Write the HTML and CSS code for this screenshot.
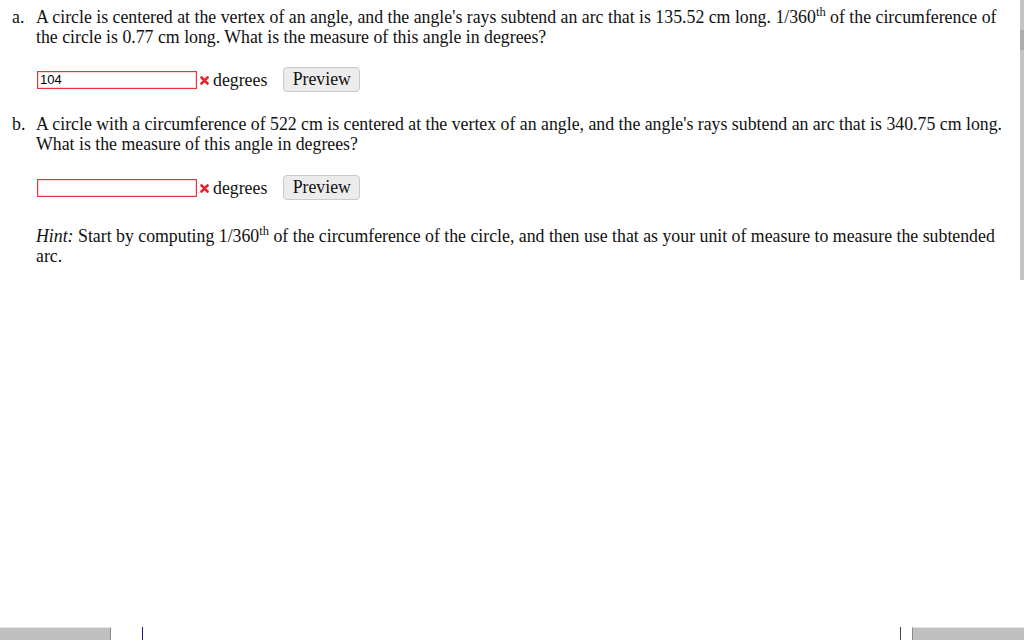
FILE: index.html
```html
<!DOCTYPE html>
<html>
<head>
<meta charset="utf-8">
<link rel="stylesheet" href="styles.css">
</head>
<body>
<div class="page">
  <main class="content">
    <div class="question">
      <span class="qlabel">a.</span>
      <div class="qtext">A circle is centered at the vertex of an angle, and the angle's rays subtend an arc that is 135.52 cm long. 1/360<sup>th</sup> of the circumference of the circle is 0.77 cm long. What is the measure of this angle in degrees?</div>
    </div>
    <div class="answer">
      <input class="field" type="text" value="104">
      <svg class="xmark" width="9" height="9" viewBox="0 0 9 9"><path d="M1.5 1.5 L7.5 7.5 M7.5 1.5 L1.5 7.5" stroke="#e0262e" stroke-width="2.6" stroke-linecap="round"/></svg>
      <span class="unit">degrees</span>
      <button class="preview">Preview</button>
    </div>
    <div class="question qb">
      <span class="qlabel">b.</span>
      <div class="qtext">A circle with a circumference of 522 cm is centered at the vertex of an angle, and the angle's rays subtend an arc that is 340.75 cm long. What is the measure of this angle in degrees?</div>
    </div>
    <div class="answer a2">
      <input class="field" type="text" value="">
      <svg class="xmark" width="9" height="9" viewBox="0 0 9 9"><path d="M1.5 1.5 L7.5 7.5 M7.5 1.5 L1.5 7.5" stroke="#e0262e" stroke-width="2.6" stroke-linecap="round"/></svg>
      <span class="unit">degrees</span>
      <button class="preview">Preview</button>
    </div>
    <p class="hint"><i>Hint:</i> Start by computing 1/360<sup>th</sup> of the circumference of the circle, and then use that as your unit of measure to measure the subtended arc.</p>
  </main>
  <footer class="bottom">
    <div class="gbox left"></div>
    <div class="vline blue"></div>
    <div class="spacer"></div>
    <div class="vline dark"></div>
    <div class="gbox right"></div>
  </footer>
  <div class="scrollbar"><div class="thumb"></div></div>
</div>
</body>
</html>
```
FILE: styles.css
```css
html, body {
  margin: 0;
  padding: 0;
  background: #ffffff;
}
body {
  font-family: "Liberation Serif", "Times New Roman", serif;
  font-size: 17.8px;
  color: #111111;
}
.page {
  position: relative;
  width: 1024px;
  height: 640px;
  overflow: hidden;
  display: flex;
  flex-direction: column;
}
.content {
  padding: 7px 15px 0 12px;
}
.question {
  display: flex;
  line-height: 20px;
}
.qlabel {
  width: 24px;
  flex: none;
}
.qtext {
  flex: 1;
}
sup {
  font-size: 12.5px;
  line-height: 0;
  vertical-align: 7px;
}
.answer {
  display: flex;
  align-items: center;
  height: 25px;
  margin: 20px 0 0 25px;
}
.qb {
  margin-top: 22px;
}
.a2 {
  margin-top: 21px;
}
.field {
  box-sizing: border-box;
  width: 160px;
  height: 18px;
  margin: 0;
  padding: 0 2px;
  border: 1px solid #e8343c;
  box-shadow: inset 0 0 0 1px #fbd5d7;
  font-family: "Liberation Sans", Arial, sans-serif;
  font-size: 13px;
  color: #000;
  outline: none;
}
.xmark {
  margin-left: 3px;
  margin-top: 1px;
}
.unit {
  margin-left: 4px;
  line-height: 20px;
}
.preview {
  box-sizing: border-box;
  margin-left: 16px;
  width: 77px;
  height: 25px;
  padding: 0;
  background: #ececec;
  border: 1px solid #cacaca;
  border-radius: 4px;
  font-family: "Liberation Serif", "Times New Roman", serif;
  font-size: 17.8px;
  color: #111;
}
.hint {
  margin: 26px 6px 0 24px;
  line-height: 20px;
}
.bottom {
  margin-top: auto;
  height: 13px;
  display: flex;
}
.gbox {
  background: #c0c0c0;
  border-top: 1px solid #e4e4e4;
  height: 12px;
}
.gbox.left {
  width: 110px;
  border-right: 1px solid #8a8a8a;
}
.gbox.right {
  width: 111px;
  border-left: 1px solid #8a8a8a;
}
.vline {
  width: 1px;
  height: 13px;
}
.vline.blue {
  background: #1a1a8a;
  margin-left: 31px;
}
.vline.dark {
  background: #444;
  margin-right: 11px;
}
.spacer {
  flex: 1;
}
.scrollbar {
  position: absolute;
  top: 0;
  right: 0;
  width: 4px;
  height: 280px;
  background: #c4c4c4;
}
.thumb {
  margin-top: 30px;
  height: 20px;
  background: #acacac;
}
```
